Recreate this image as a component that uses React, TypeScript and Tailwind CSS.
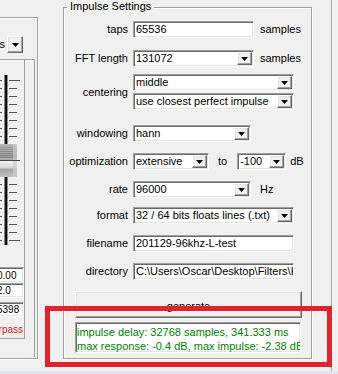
import React from 'react';

const sunken =
  'bg-white border border-t-[#a0a0a0] border-l-[#a0a0a0] border-b-white border-r-white shadow-[inset_1px_1px_0_#696969,inset_-1px_-1px_0_#e3e3e3]';

const raised =
  'bg-[#f0f0f0] border border-t-white border-l-white border-b-[#696969] border-r-[#696969] shadow-[inset_-1px_-1px_0_#a0a0a0,inset_1px_1px_0_#e3e3e3]';

function Arrow() {
  return (
    <svg width="7" height="4" viewBox="0 0 7 4" className="block">
      <path d="M0 0h7L3.5 4z" fill="#000" />
    </svg>
  );
}

function DropButton({ size = 'w-[15px] h-[13px]' }: { size?: string }) {
  return (
    <div className={`${size} shrink-0 flex items-center justify-center ${raised}`}>
      <Arrow />
    </div>
  );
}

function Combo({ w, text }: { w: string; text: string }) {
  return (
    <div className={`${w} h-[17px] shrink-0 flex items-center p-[1px] ${sunken}`}>
      <span className="flex-1 pl-[1px] leading-[13px] whitespace-nowrap overflow-hidden">{text}</span>
      <DropButton />
    </div>
  );
}

function TextBox({ w, text }: { w: string; text: string }) {
  return (
    <div className={`${w} h-[17px] shrink-0 flex items-center pl-[2px] pr-[1px] overflow-hidden ${sunken}`}>
      <span className="whitespace-nowrap leading-[13px]">{text}</span>
    </div>
  );
}

function Row({ label, className = '', children }: { label: string; className?: string; children: React.ReactNode }) {
  return (
    <div className={`flex items-center ${className}`}>
      <div className="w-[65px] shrink-0 pr-[1px] text-right whitespace-nowrap">{label}</div>
      <div className="ml-[4px] flex items-center">{children}</div>
    </div>
  );
}

function Slider() {
  const ticks = Array.from({ length: 21 }, (_, i) => 20 + i * 8);
  const stripes = Array.from({ length: 8 }, (_, i) => 86 + i * 2);
  return (
    <svg width="24" height="195" className="block ml-[10px]">
      <defs>
        <linearGradient id="thumb" x1="0" y1="0" x2="0" y2="1">
          <stop offset="0" stopColor="#c4c4c4" />
          <stop offset="0.08" stopColor="#9a9a9a" />
          <stop offset="0.4" stopColor="#7c7c7c" />
          <stop offset="0.48" stopColor="#b0b0b0" />
          <stop offset="0.5" stopColor="#5a5a5a" />
          <stop offset="0.53" stopColor="#eeeeee" />
          <stop offset="0.72" stopColor="#d6d6d6" />
          <stop offset="0.76" stopColor="#a4a4a4" />
          <stop offset="1" stopColor="#c2c2c2" />
        </linearGradient>
      </defs>
      {ticks.map((y, i) => (
        <g key={y} stroke="#555" strokeWidth="1">
          <line x1="0" x2="2" y1={y + 0.5} y2={y + 0.5} />
          <line x1="9" x2={i % 10 === 0 ? 20 : 17} y1={y + 0.5} y2={y + 0.5} />
        </g>
      ))}
      <rect x="4" y="15" width="4" height="170" fill="#8a8a8a" />
      <rect x="5" y="15" width="2" height="170" fill="#111" />
      <rect x="0" y="84" width="17" height="33" fill="url(#thumb)" />
      {stripes.map((y) => (
        <rect key={y} x="0" y={y} width="13" height="1" fill="#fff" opacity="0.25" />
      ))}
      <rect x="13" y="84" width="4" height="33" fill="#cfcfcf" opacity="0.7" />
      <line x1="0" x2="20" y1="100.5" y2="100.5" stroke="#444" />
    </svg>
  );
}

function LeftPanel() {
  return (
    <div className="w-[63px] shrink-0 pt-[17px]">
      <div className="ml-[-10px] w-[48px] h-[342px] border-t border-r border-b border-[#a0a0a0] shadow-[inset_1px_1px_0_#fff,1px_1px_0_#fff]">
        <div className="mt-[18px] w-[33px] h-[17px] flex items-center justify-end">
          <span>s</span>
          <div className="ml-[2px]">
            <DropButton size="w-[16px] h-[17px]" />
          </div>
        </div>
        <div className="mt-[6px] w-[45px] h-[298px] border-t border-r border-[#a0a0a0] shadow-[inset_1px_1px_0_#fff]">
          <div className="w-[35px] h-[279px] border-r border-b border-[#a0a0a0] text-[10px]">
            <Slider />
            <div className={`mt-[12px] ml-[5px] w-[29px] h-[16px] flex items-center pl-[1px] overflow-hidden ${sunken}`}>
              <span className="leading-[13px]">0.00</span>
            </div>
            <div className={`ml-[5px] w-[29px] h-[15px] flex items-center pl-[1px] overflow-hidden ${sunken}`}>
              <span className="leading-[13px]">2.0</span>
            </div>
            <div className={`mt-[4px] ml-[5px] w-[29px] h-[15px] flex items-center pl-[1px] overflow-hidden ${sunken}`}>
              <span className="leading-[13px]">5398</span>
            </div>
            <div className="mt-[6px] w-[33px] flex justify-end overflow-hidden leading-[13px] text-[#cc1a1a]">
              <span className="whitespace-nowrap">rpass</span>
            </div>
          </div>
        </div>
      </div>
    </div>
  );
}

function ImpulseSettings() {
  return (
    <div className="relative mt-[7px] w-[249px] h-[352px] shrink-0 self-start border border-[#a0a0a0] shadow-[inset_1px_1px_0_#fff,1px_1px_0_#fff]">
      <div className="absolute left-[3px] top-[-8px] px-[3px] bg-[#f0f0f0] leading-[13px]">Impulse Settings</div>
      <div className="flex flex-col pt-[13px]">
        <Row label="taps">
          <TextBox w="w-[121px]" text="65536" />
          <span className="ml-[6px]">samples</span>
        </Row>
        <Row label="FFT length" className="mt-[12px]">
          <Combo w="w-[121px]" text="131072" />
          <span className="ml-[6px]">samples</span>
        </Row>
        <Row label="centering" className="mt-[7px]">
          <div className="flex flex-col gap-[2px]">
            <Combo w="w-[161px]" text="middle" />
            <Combo w="w-[161px]" text="use closest perfect impulse" />
          </div>
        </Row>
        <Row label="windowing" className="mt-[15px]">
          <Combo w="w-[118px]" text="hann" />
        </Row>
        <Row label="optimization" className="mt-[11px]">
          <Combo w="w-[76px]" text="extensive" />
          <span className="ml-[9px]">to</span>
          <div className="ml-[10px]">
            <Combo w="w-[49px]" text="-100" />
          </div>
          <span className="ml-[4px]">dB</span>
        </Row>
        <Row label="rate" className="mt-[11px]">
          <Combo w="w-[118px]" text="96000" />
          <span className="ml-[9px]">Hz</span>
        </Row>
        <Row label="format" className="mt-[9px]">
          <Combo w="w-[161px]" text="32 / 64 bits floats lines (.txt)" />
        </Row>
        <Row label="filename" className="mt-[11px]">
          <TextBox w="w-[161px]" text="201129-96khz-L-test" />
        </Row>
        <Row label="directory" className="mt-[11px]">
          <TextBox w="w-[161px]" text="C:\Users\Oscar\Desktop\Filters\H" />
        </Row>
        <button className={`mt-[11px] ml-[11px] w-[227px] h-[27px] pt-[4px] flex items-center justify-center leading-[13px] ${raised}`}>
          generate
        </button>
        <div className={`mt-[4px] ml-[11px] w-[226px] h-[31px] pt-[2px] pl-[1px] leading-[14px] text-[#008000] whitespace-nowrap overflow-hidden ${sunken}`}>
          <div>impulse delay: 32768 samples, 341.333 ms</div>
          <div>max response: -0.4 dB, max impulse: -2.38 dB</div>
        </div>
      </div>
    </div>
  );
}

export default function App() {
  return (
    <div className="relative w-[338px] h-[374px] overflow-hidden bg-[#f0f0f0] text-[11px] text-black font-['Liberation_Sans',Arial,sans-serif] flex flex-col">
      <div className="flex h-[371px]">
        <LeftPanel />
        <ImpulseSettings />
        <div className="ml-[19px] flex">
          <div className="w-[1px] bg-[#a0a0a0]" />
          <div className="w-[1px] bg-white" />
        </div>
      </div>
      <div className="h-[3px] bg-[#dde6f2]" />
      {/* red annotation frame drawn over the result box */}
      <div className="absolute left-[45px] top-[306px] w-[287px] h-[61px] border-[5px] border-[#e4222b]" />
    </div>
  );
}
